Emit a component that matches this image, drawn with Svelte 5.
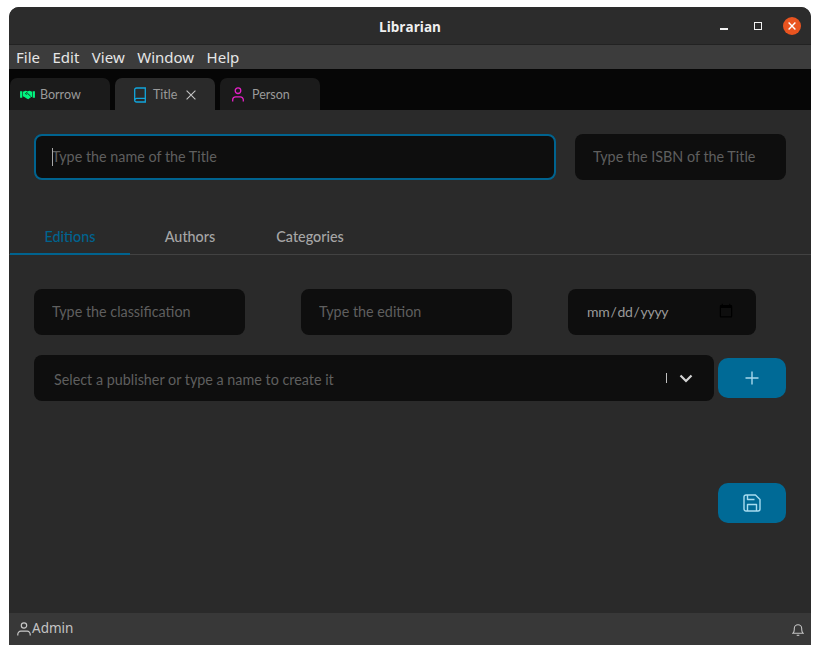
<script>
  let topTab = $state('title');
  let subTab = $state('editions');

  const menus = ['File', 'Edit', 'View', 'Window', 'Help'];
  const subTabs = [
    { id: 'editions', label: 'Editions' },
    { id: 'authors', label: 'Authors' },
    { id: 'categories', label: 'Categories' }
  ];
</script>

<div class="window">
  <header class="titlebar">
    <span class="app-title">Librarian</span>
    <div class="controls">
      <span class="ctl-min"></span>
      <span class="ctl-max"></span>
      <span class="ctl-close">
        <svg width="16" height="16" viewBox="0 0 16 16"><path d="M4.600 4.600l6.800 6.800M11.400 4.600l-6.800 6.800" stroke="#fff" stroke-width="1.400" fill="none" /></svg>
      </span>
    </div>
  </header>

  <nav class="menubar">
    {#each menus as m}
      <span class="menu-item">{m}</span>
    {/each}
  </nav>

  <div class="tabstrip">
    <button class="tab" class:active={topTab === 'borrow'} onclick={() => (topTab = 'borrow')}>
      <svg class="tab-icon borrow" width="15" height="13" viewBox="0 0 16 14">
        <path d="M0 3.500h2.400v7H0zM13.600 3.500H16v7h-2.400z" fill="#00f57f" />
        <path d="M3 4l3-1 2 .6L10.200 3l2.800 1v5.300l-1 .4-3.200 2.300-1.200-.4-3.400-2.300-1.200-.5z" fill="#00f57f" />
        <path d="M8 4L5.800 6.200c.8.800 1.700.5 2.400-.3l3.400 3.200" stroke="#1a1a1a" stroke-width=".9" fill="none" />
      </svg>
      <span>Borrow</span>
    </button>
    <button class="tab" class:active={topTab === 'title'} onclick={() => (topTab = 'title')}>
      <svg class="tab-icon" width="12" height="16" viewBox="0 0 12 16" fill="none" stroke="#12a5dc" stroke-width="1.300">
        <path d="M2.500 1h8.800v14H2.500A1.800 1.800 0 0 1 .7 13.200V2.800A1.800 1.800 0 0 1 2.500 1z" />
        <path d="M.7 13.200a1.800 1.800 0 0 1 1.800-1.800h8.800" />
      </svg>
      <span>Title</span>
      <svg class="tab-close" width="10" height="10" viewBox="0 0 10 10"><path d="M.6.600l8.800 8.800M9.400.600L.6 9.400" stroke="#c4c4c4" stroke-width="1.100" fill="none" /></svg>
    </button>
    <button class="tab" class:active={topTab === 'person'} onclick={() => (topTab = 'person')}>
      <svg class="tab-icon" width="12" height="15" viewBox="0 0 12 15" fill="none" stroke="#e620c8" stroke-width="1.300">
        <circle cx="6" cy="3.700" r="2.800" />
        <path d="M.7 14.500v-1.700A3 3 0 0 1 3.700 9.800h4.600a3 3 0 0 1 3 3v1.700" />
      </svg>
      <span>Person</span>
    </button>
  </div>

  <main class="content">
    <div class="title-row">
      <div class="focus-wrap">
        <input class="field focused" type="text" placeholder="Type the name of the Title" />
        <span class="caret"></span>
      </div>
      <input class="field" type="text" placeholder="Type the ISBN of the Title" />
    </div>

    <div class="subtabs">
      {#each subTabs as t (t.id)}
        <button class="subtab" class:active={subTab === t.id} onclick={() => (subTab = t.id)}>{t.label}</button>
      {/each}
    </div>

    <div class="edition-row">
      <input class="field" type="text" placeholder="Type the classification" />
      <input class="field" type="text" placeholder="Type the edition" />
      <input class="field date" type="date" />
    </div>

    <div class="publisher-row">
      <div class="select">
        <span class="select-text">Select a publisher or type a name to create it</span>
        <span class="select-sep"></span>
        <svg width="14" height="9" viewBox="0 0 14 9"><path d="M1.500 1.500L7 7l5.500-5.500" stroke="#d4d4d4" stroke-width="2.200" fill="none" /></svg>
      </div>
      <button class="btn" aria-label="Add publisher">
        <svg width="14" height="14" viewBox="0 0 14 14"><path d="M7 .5v13M.5 7h13" stroke="#a6d8ec" stroke-width="1.400" fill="none" /></svg>
      </button>
    </div>

    <div class="actions">
      <button class="btn" aria-label="Save">
        <svg width="18" height="18" viewBox="0 0 18 18" fill="none" stroke="#a6dcf0" stroke-width="1.400" stroke-linejoin="round">
          <path d="M3 1h9.500L17 5.500V15a2 2 0 0 1-2 2H3a2 2 0 0 1-2-2V3a2 2 0 0 1 2-2z" />
          <path d="M4.500 17v-6.500h9V17M4.500 1v4.500h7" />
        </svg>
      </button>
    </div>
  </main>

  <footer class="statusbar">
    <div class="user">
      <svg width="14" height="14" viewBox="0 0 14 14" fill="none" stroke="#c8c8c8" stroke-width="1.200">
        <circle cx="7" cy="3.500" r="2.700" />
        <path d="M.8 13.500v-1.300a3 3 0 0 1 3-3h6.400a3 3 0 0 1 3 3v1.300" />
      </svg>
      <span>Admin</span>
    </div>
    <svg width="12" height="13" viewBox="0 0 12 13" fill="none" stroke="#c4c4c4" stroke-width="1.100">
      <path d="M.8 10.300c1.200-1 1.500-2 1.500-3.800V5.400a3.700 3.700 0 0 1 7.400 0v1.100c0 1.800.3 2.800 1.500 3.800z" />
      <path d="M4.700 12.300h2.600" />
    </svg>
  </footer>
</div>

<style>
  :global(body) {
    background: #fff;
  }

  .window {
    box-sizing: border-box;
    width: 802px;
    height: 638px;
    margin: 7px 0 0 9px;
    display: flex;
    flex-direction: column;
    background: #2a2a2a;
    border-radius: 10px 10px 0 0;
    overflow: hidden;
    font-family: 'Lato', 'Open Sans', sans-serif;
    color: #c8c8c8;
  }

  .titlebar {
    flex: 0 0 37px;
    position: relative;
    display: flex;
    align-items: center;
    justify-content: center;
    background: #2c2c2c;
    border-bottom: 1px solid #222;
    box-sizing: content-box;
  }

  .app-title {
    margin-top: 2px;
    font-family: 'Open Sans', sans-serif;
    font-weight: 700;
    font-size: 13.500px;
    color: #f0f0f0;
  }

  .controls {
    position: absolute;
    right: 10px;
    top: 10px;
    display: flex;
    align-items: center;
  }

  .ctl-min {
    width: 8px;
    height: 1.500px;
    margin-top: 6px;
    background: #f2f2f2;
  }

  .ctl-max {
    width: 6px;
    height: 6px;
    margin-left: 26px;
    border: 1px solid #f2f2f2;
  }

  .ctl-close {
    width: 18px;
    height: 18px;
    margin-left: 21px;
    display: flex;
    align-items: center;
    justify-content: center;
    border-radius: 50%;
    background: #e95420;
  }

  .menubar {
    flex: 0 0 24px;
    display: flex;
    align-items: center;
    gap: 12.500px;
    padding-left: 7px;
    background: #3c3c3c;
    font-family: 'Noto Sans', sans-serif;
    font-size: 15px;
    color: #e6e6e6;
  }

  .tabstrip {
    flex: 0 0 41px;
    box-sizing: border-box;
    display: flex;
    align-items: flex-end;
    gap: 5px;
    padding-left: 1px;
    background: #060606;
  }

  .tab {
    width: 100px;
    height: 32px;
    display: flex;
    align-items: center;
    padding: 1px 0 0 10px;
    border: 0;
    border-radius: 7px 7px 0 0;
    background: #1b1b1b;
    color: #9a9a9a;
    font-family: 'Lato', sans-serif;
    font-size: 12.500px;
  }

  .tab.active {
    background: #2a2a2a;
    padding-left: 19px;
  }

  .tab-icon {
    margin-right: 5px;
    flex: none;
  }

  .tab.active .tab-icon {
    margin-right: 7px;
  }

  .tab-close {
    margin-left: 9px;
  }

  .tab:last-child {
    padding-left: 12px;
  }

  .tab:last-child .tab-icon {
    margin-right: 8px;
  }

  .content {
    flex: 1;
    display: flex;
    flex-direction: column;
    min-height: 0;
  }

  .title-row {
    display: grid;
    grid-template-columns: 522px 211px;
    column-gap: 19px;
    padding: 24px 24px 0 25px;
  }

  .focus-wrap {
    position: relative;
    display: flex;
  }

  .caret {
    position: absolute;
    left: 18px;
    top: 14px;
    width: 1px;
    height: 18px;
    background: #a8a8a8;
  }

  .field {
    box-sizing: border-box;
    width: 100%;
    height: 46px;
    padding: 0 18px 2px;
    border: 0;
    border-radius: 8px;
    outline: 0;
    background: #0e0e0e;
    color: #8a8a8a;
    font-family: 'Lato', sans-serif;
    font-size: 14.350px;
    color-scheme: dark;
  }

  .field::placeholder {
    color: #5f5f5f;
    opacity: 1;
  }

  .field.focused {
    border: 2px solid #00638f;
    padding: 0 16px 2px;
  }

  .date {
    color: #9a9a9a;
    padding: 0 18px 2px;
    font-size: 14px;
    letter-spacing: -0.3px;
  }

  .date::-webkit-calendar-picker-indicator {
    width: 16px;
    height: 16px;
    margin-right: 2px;
    filter: brightness(0);
  }

  .subtabs {
    display: flex;
    margin-top: 35px;
    height: 39px;
    padding-left: 1px;
    border-bottom: 1px solid #424242;
  }

  .subtab {
    width: 120px;
    padding: 4px 0 0;
    border: 0;
    background: none;
    color: #a6a6a6;
    font-family: 'Lato', sans-serif;
    font-weight: 500;
    font-size: 14.350px;
    margin-bottom: -1px;
    border-bottom: 2px solid transparent;
  }

  .subtab.active {
    color: #00638f;
    border-bottom-color: #00638f;
  }

  .edition-row {
    display: grid;
    grid-template-columns: 211px 211px 188px;
    column-gap: 56px;
    padding: 34px 0 0 25px;
  }

  .publisher-row {
    display: flex;
    align-items: center;
    gap: 4px;
    padding: 20px 24px 0 25px;
  }

  .select {
    box-sizing: border-box;
    width: 680px;
    height: 46px;
    display: flex;
    align-items: center;
    padding: 0 21px 0 20px;
    border-radius: 8px;
    background: #0e0e0e;
    font-size: 14.350px;
    color: #5f5f5f;
  }

  .select-text {
    flex: 1;
    padding-top: 3px;
  }

  .select-sep {
    width: 1px;
    height: 10px;
    margin-right: 12px;
    background: #c0c0c0;
  }

  .btn {
    width: 68px;
    height: 40px;
    display: flex;
    align-items: center;
    justify-content: center;
    padding: 0;
    border: 0;
    border-radius: 10px;
    background: #006a96;
  }

  .actions {
    display: flex;
    justify-content: flex-end;
    padding: 82px 25px 0 0;
  }

  .statusbar {
    flex: 0 0 32px;
    display: flex;
    align-items: center;
    justify-content: space-between;
    padding: 0 7px 0 8px;
    background: #383838;
  }

  .user {
    display: flex;
    align-items: center;
    gap: 1px;
    font-family: 'Noto Sans', sans-serif;
    font-size: 13.500px;
    line-height: 1;
    color: #c4c4c4;
  }
</style>
